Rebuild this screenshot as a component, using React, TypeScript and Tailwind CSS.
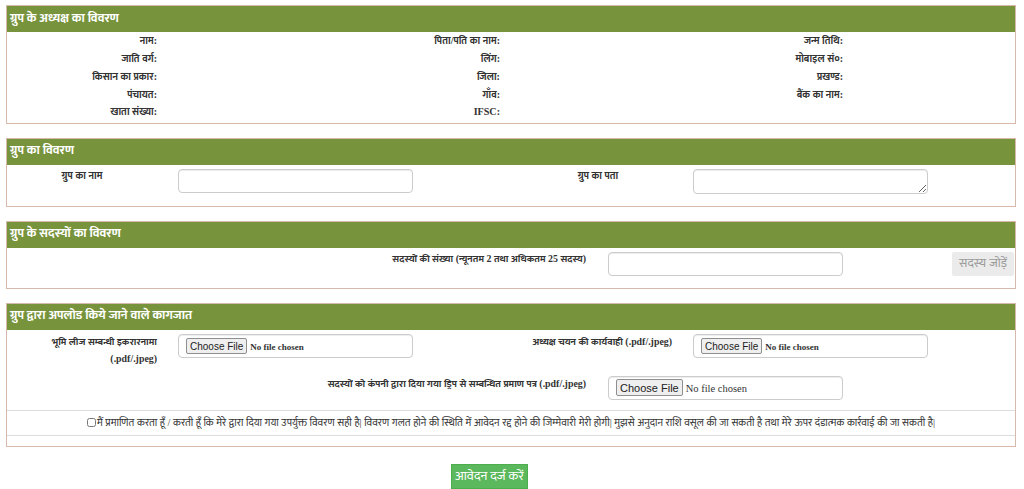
import React from "react";

const inputCls =
    "h-[24px] w-[235px] rounded-[4px] border border-[#cccccc] bg-white shadow-[inset_0_1px_1px_rgba(0,0,0,0.075)] outline-none";

function Panel({ title, children }: { title: string; children: React.ReactNode }) {
    return (
        <div className="ml-[6px] mr-[8px] border border-[#d6b9ab] bg-white">
            <div className="flex h-[26px] items-center bg-[#77933c] px-[3px] font-['Mukta','Noto_Sans_Devanagari',sans-serif] text-[12.5px] font-bold text-white">
                {title}
            </div>
            {children}
        </div>
    );
}

function FileBox({ big }: { big?: boolean }) {
    return (
        <div className={`${inputCls} flex items-center px-[7px]`}>
            {big ? (
                <input
                    type="file"
                    className="w-full font-['Liberation_Serif',serif] text-[10.5px] font-normal text-[#333] file:mr-[3px] file:h-[17px] file:rounded-[2px] file:border file:border-[#8f8f8f] file:bg-[#efefef] file:px-[3px] file:font-['Liberation_Sans',sans-serif] file:text-[11px] file:font-normal file:text-[#222]"
                />
            ) : (
                <input
                    type="file"
                    className="w-full font-['Liberation_Serif',serif] text-[9px] font-bold text-[#333] file:mr-[3px] file:h-[16px] file:rounded-[2px] file:border file:border-[#8f8f8f] file:bg-[#efefef] file:px-[3px] file:font-['Liberation_Sans',sans-serif] file:text-[10px] file:font-normal file:text-[#222]"
                />
            )}
        </div>
    );
}

const headRows = [
    ["नाम:", "पिता/पति का नाम:", "जन्म तिथि:"],
    ["जाति वर्ग:", "लिंग:", "मोबाइल सं०:"],
    ["किसान का प्रकार:", "जिला:", "प्रखण्ड:"],
    ["पंचायत:", "गाँव:", "बैंक का नाम:"],
    ["खाता संख्या:", "IFSC:", ""],
];

export default function App() {
    return (
        <div className="min-h-[489px] bg-white pt-[5px] font-['Liberation_Serif','Mukta',serif] text-[#333]">
            {/* अध्यक्ष */}
            <Panel title="ग्रुप के अध्यक्ष का विवरण">
                <div className="grid grid-cols-[151px_192px_151px_192px_151px_1fr] auto-rows-[17.75px] pb-[2px] text-[10.1px] font-bold">
                    {headRows.map((row, i) => (
                        <React.Fragment key={i}>
                            {row.map((label, j) => (
                                <React.Fragment key={j}>
                                    <div className="flex items-center justify-end pr-[1px]">{label}</div>
                                    <div />
                                </React.Fragment>
                            ))}
                        </React.Fragment>
                    ))}
                </div>
            </Panel>

            {/* ग्रुप */}
            <div className="mt-[14px]">
                <Panel title="ग्रुप का विवरण">
                    <div className="flex h-[41px] items-start text-[10.1px] font-bold">
                        <div className="w-[150px] pt-[3px] text-center leading-[16px]">ग्रुप का नाम</div>
                        <input className={`${inputCls} ml-[21px] mt-[4px]`} />
                        <div className="ml-[110px] w-[150px] pt-[3px] text-center leading-[16px]">ग्रुप का पता</div>
                        <textarea className={`${inputCls} ml-[20px] mt-[4px] h-[25px] resize`} rows={1} />
                    </div>
                </Panel>
            </div>

            {/* सदस्य */}
            <div className="mt-[14px]">
                <Panel title="ग्रुप के सदस्यों का विवरण">
                    <div className="flex h-[40px] items-start text-[9.9px]">
                        <div className="w-[579px] pt-[3px] text-right font-bold leading-[16px]">
                            सदस्यों की संख्या (न्यूनतम 2 तथा अधिकतम 25 सदस्य)
                        </div>
                        <input className={`${inputCls} ml-[22px] mt-[4px]`} />
                        <button
                            disabled
                            className="ml-auto mr-[1px] mt-[4px] h-[24px] w-[62px] rounded-[2px] bg-[#ebebeb] text-[12.5px] text-[#9a9a9a]"
                        >
                            सदस्य जोड़ें
                        </button>
                    </div>
                </Panel>
            </div>

            {/* कागजात */}
            <div className="mt-[14px]">
                <Panel title="ग्रुप द्वारा अपलोड किये जाने वाले कागजात">
                    <div className="flex h-[41px] items-start text-[9.9px] font-bold">
                        <div className="w-[151px] pr-[1px] pt-[3px] text-right leading-[17px]">
                            भूमि लीज सम्बन्धी इकरारनामा
                            <br />
                            (.pdf/.jpeg)
                        </div>
                        <div className="ml-[20px] mt-[4px]">
                            <FileBox />
                        </div>
                        <div className="w-[259px] pt-[3px] text-right leading-[17px]">
                            अध्यक्ष चयन की कार्यवाही (.pdf/.jpeg)
                        </div>
                        <div className="ml-[21px] mt-[4px]">
                            <FileBox />
                        </div>
                    </div>
                    <div className="flex items-start pb-[10px] pt-[5px] text-[9.9px] font-bold">
                        <div className="w-[579px] text-right leading-[16px]">
                            सदस्यों को कंपनी द्वारा दिया गया ड्रिप से सम्बन्धित प्रमाण पत्र (.pdf/.jpeg)
                        </div>
                        <div className="ml-[22px]">
                            <FileBox big />
                        </div>
                    </div>
                    <div className="flex h-[26px] items-center justify-center border-y border-[#dddddd] text-[10.4px]">
                        <input type="checkbox" className="mr-[1px] h-[9px] w-[9px]" />
                        मैं प्रमाणित करता हूँ / करती हूँ कि मेरे द्वारा दिया गया उपर्युक्त विवरण सही है| विवरण गलत होने की स्थिति में आवेदन रद्द होने की जिम्मेवारी मेरी होगी| मुझसे अनुदान राशि वसूल की जा सकती है तथा मेरे ऊपर दंडात्मक कार्रवाई की जा सकती है|
                    </div>
                    <div className="h-[10px]" />
                </Panel>
            </div>

            <div className="mt-[17px] flex w-[979px] justify-center">
                <button className="h-[25px] w-[77px] border border-[#4cae4c] bg-[#5cb85c] font-['Mukta',sans-serif] text-[13px] text-white">
                    आवेदन दर्ज करें
                </button>
            </div>
        </div>
    );
}
